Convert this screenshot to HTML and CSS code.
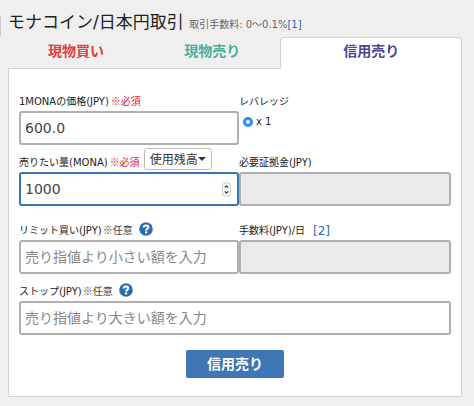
FILE: index.html
```html
<!DOCTYPE html>
<html lang="ja">
    <head>
        <meta charset="utf-8">
        <meta name="viewport" content="width=device-width, initial-scale=1">
        <title>モナコイン/日本円取引</title>
        <link rel="stylesheet" href="styles.css">
    </head>
    <body>
        <div class="side"></div>
        <main class="trade">
            <h1 class="title">モナコイン/日本円取引 <small>取引手数料: 0〜0.1%<a href="#fee">[1]</a></small></h1>
            <nav class="tabs">
                <a class="tab buy" href="#buy">現物買い</a>
                <a class="tab sell" href="#sell">現物売り</a>
                <a class="tab margin active" href="#margin">信用売り</a>
            </nav>
            <form class="panel">
                <div class="field">
                    <div class="head"><label for="price">1MONAの価格(JPY)<span class="must">※必須</span></label></div>
                    <input class="text" type="text" id="price" value="600.0">
                </div>
                <div class="field">
                    <div class="head"><span>レバレッジ</span></div>
                    <label class="radio"><input type="radio" name="leverage" checked>x 1</label>
                </div>
                <div class="field">
                    <div class="head">
                        <label for="amount">売りたい量(MONA)<span class="must">※必須</span></label>
                        <button class="drop" type="button">使用残高<span class="caret"></span></button>
                    </div>
                    <div class="number">
                        <input class="text focus" type="text" inputmode="decimal" id="amount" value="1000">
                        <svg class="spin" viewBox="0 0 9 15" width="9" height="15">
                            <rect x=".5" y=".5" width="8" height="14" rx="4" fill="#fff" stroke="#c4c4c4"/>
                            <path d="M2.8 5.6L4.5 3.8L6.2 5.6M2.8 9.4L4.5 11.2L6.2 9.4" fill="none" stroke="#333" stroke-width="1.2"/>
                        </svg>
                    </div>
                </div>
                <div class="field">
                    <div class="head"><label for="deposit">必要証拠金(JPY)</label></div>
                    <input class="text" type="text" id="deposit" disabled>
                </div>
                <div class="field spaced">
                    <div class="head">
                        <label for="limit">リミット買い(JPY)<span class="option">※任意</span></label>
                        <svg class="help" viewBox="0 0 14 14" width="14" height="14">
                            <circle cx="7" cy="7" r="6.8" fill="#2b6cb0"/>
                            <path d="M4.7 5.5C4.8 2.8 9.3 2.8 9.3 5.3C9.3 6.8 7.1 6.8 7.1 8.5" fill="none" stroke="#fff" stroke-width="2.1"/>
                            <rect x="6" y="9.4" width="2.2" height="2" fill="#fff"/>
                        </svg>
                    </div>
                    <input class="text" type="text" id="limit" placeholder="売り指値より小さい額を入力">
                </div>
                <div class="field spaced">
                    <div class="head"><label for="daily">手数料(JPY)/日</label><a class="note" href="#daily-fee">[2]</a></div>
                    <input class="text" type="text" id="daily" disabled>
                </div>
                <div class="field wide">
                    <div class="head">
                        <label for="stop">ストップ(JPY)<span class="option">※任意</span></label>
                        <svg class="help" viewBox="0 0 14 14" width="14" height="14">
                            <circle cx="7" cy="7" r="6.8" fill="#2b6cb0"/>
                            <path d="M4.7 5.5C4.8 2.8 9.3 2.8 9.3 5.3C9.3 6.8 7.1 6.8 7.1 8.5" fill="none" stroke="#fff" stroke-width="2.1"/>
                            <rect x="6" y="9.4" width="2.2" height="2" fill="#fff"/>
                        </svg>
                    </div>
                    <input class="text" type="text" id="stop" placeholder="売り指値より大きい額を入力">
                </div>
                <button class="submit" type="button">信用売り</button>
            </form>
        </main>
    </body>
</html>
```
FILE: styles.css
```css
*{
    box-sizing: border-box;
}
body{
    margin:0;
    min-height: 100vh;
    display: flex;
    background: #efefef;
    color:#222;
    font:10px/16px "DejaVu Sans","Noto Sans CJK JP",sans-serif;
}
input,button{
    font-family: inherit;
    margin:0;
}
a{
    color:#2b6cb0;
    text-decoration: none;
}
/* edge of the neighbouring column */
.side{
    display: flex;
    flex-direction: column;
    width:4px;
    padding:16px 0 68px;
}
.side::before{
    content:"";
    width:1px;
    height:20px;
    background: #c8c8c8;
}
.side::after{
    content:"";
    flex:1;
    background: #eeeff7;
}
.trade{
    flex:1;
    padding:8px 12px 9px 4px;
}
.title{
    margin:0;
    height:29px;
    font-size:17px;
    line-height:29px;
    font-weight: normal;
    white-space: nowrap;
}
.title small{
    font-size:10px;
    color:#666;
}
.tabs{
    display: grid;
    grid-template-columns: 3fr 3fr 4fr;
}
.tab{
    height:32px;
    border-bottom:1px solid #d3d3d3;
    font-size:14px;
    line-height:28px;
    font-weight: bold;
    text-align: center;
}
.buy{
    color:#e23c3f;
}
.sell{
    color:#4bae98;
}
.margin{
    color:#48459a;
}
.tab.active{
    border:1px solid #d3d3d3;
    border-bottom:none;
    border-radius: 4px 4px 0 0;
    background: #fff;
    line-height:26px;
}
.panel{
    display: grid;
    grid-template-columns: 220fr 212fr;
    padding:15px 10px 18px;
    border:1px solid #d3d3d3;
    border-top:none;
    background: #fff;
}
.head{
    display: flex;
    align-items: center;
    height:27px;
    padding-top:8px;
    white-space: nowrap;
}
.spaced{
    padding-top:7px;
}
.wide{
    grid-column: 1 / 3;
}
.must,.option{
    font-family: "Noto Sans CJK JP",sans-serif;
}
.must{
    margin-left:2px;
    color:#d9232e;
}
.option{
    margin-left:1px;
    color:#444;
}
.text{
    display: block;
    width:100%;
    height:34px;
    padding:0 4px;
    border:3px solid #b0b0b0;
    border-width:2px;
    border-radius: 3px;
    background: #fff;
    color:#444;
    font-size:14px;
    outline: none;
}
.text::placeholder{
    color:#888;
    opacity: 1;
}
.text:disabled{
    background: #eaeaea;
}
.text.focus{
    border-color: #3b75b5;
}
.number{
    position: relative;
}
.spin{
    position: absolute;
    right:8px;
    top:10px;
}
.radio{
    display: flex;
    align-items: center;
    gap:3px;
    height:22px;
    padding-left:4px;
}
.radio input{
    appearance: none;
    width:10px;
    height:10px;
    border:3px solid #2f8cff;
    border-radius: 50%;
    background: #fff;
}
.drop{
    display: flex;
    align-items: center;
    height:22px;
    margin:-8px 0 0 4px;
    padding:0 5px;
    border:1px solid #bbb;
    border-radius: 3px;
    background: #fff;
    color:#333;
    font-size:12px;
}
.caret{
    border:4px solid transparent;
    border-top-color: #333;
    border-bottom:none;
}
.help{
    margin-left:6px;
    margin-bottom:4px;
}
.note{
    margin-left:8px;
    font-size:12px;
}
.submit{
    grid-column: 1 / 3;
    justify-self: center;
    width:98px;
    height:28px;
    margin-top:15px;
    padding:0 0 2px;
    border:none;
    border-radius: 2px;
    background: #3f76b5;
    color:#fff;
    font-size:14px;
    font-weight: bold;
}
```
